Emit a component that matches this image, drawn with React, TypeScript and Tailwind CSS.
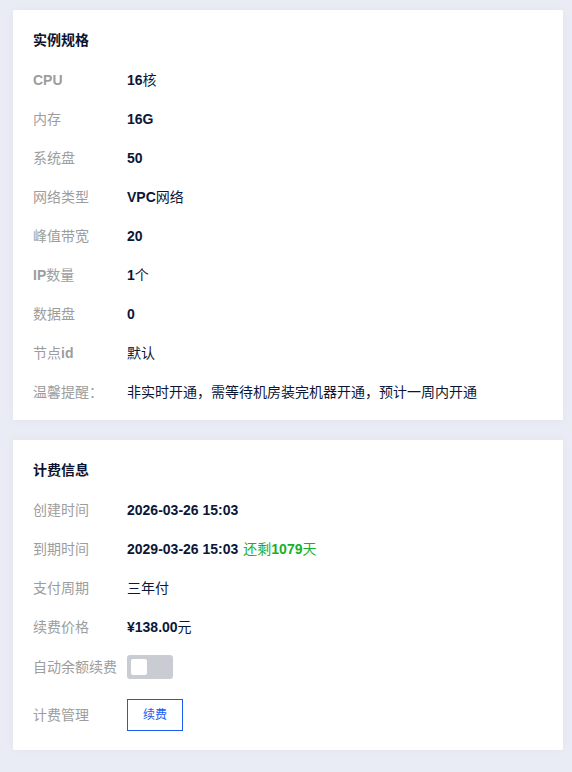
import React from "react";

const font = {
  fontFamily: "'Liberation Sans', 'Noto Sans CJK SC', sans-serif",
};

function Row({
  label,
  children,
  className = "",
}: {
  label: React.ReactNode;
  children: React.ReactNode;
  className?: string;
}) {
  return (
    <div className={`flex items-center ${className}`}>
      <div className="w-[94px] shrink-0 text-[14px] leading-[22px] text-[#9d9d9d]">
        {label}
      </div>
      <div className="flex items-center text-[14px] leading-[22px] text-[#0b1738]">
        {children}
      </div>
    </div>
  );
}

const B = ({ children }: { children: React.ReactNode }) => (
  <span className="font-bold">{children}</span>
);

export default function App() {
  return (
    <div
      className="min-h-[772px] w-[572px] bg-[#e9ecf4] pt-[10px]"
      style={font}
    >
      {/* 实例规格 */}
      <div className="ml-[13px] w-[550px] bg-white px-5 pt-[19px] pb-[17px] shadow-[0_0_10px_rgba(0,20,80,0.04)]">
        <div className="text-[14px] font-bold leading-[22px] text-[#0b1430]">
          实例规格
        </div>
        <div className="mt-[18px] flex flex-col gap-[17px]">
          <Row label={<B>CPU</B>}>
            <B>16</B>核
          </Row>
          <Row label="内存">
            <B>16G</B>
          </Row>
          <Row label="系统盘">
            <B>50</B>
          </Row>
          <Row label="网络类型">
            <B>VPC</B>网络
          </Row>
          <Row label="峰值带宽">
            <B>20</B>
          </Row>
          <Row
            label={
              <>
                <B>IP</B>数量
              </>
            }
          >
            <B>1</B>个
          </Row>
          <Row label="数据盘">
            <B>0</B>
          </Row>
          <Row
            label={
              <>
                节点<B>id</B>
              </>
            }
          >
            默认
          </Row>
          <Row label="温馨提醒：">
            非实时开通，需等待机房装完机器开通，预计一周内开通
          </Row>
        </div>
      </div>

      {/* 计费信息 */}
      <div className="ml-[13px] mt-5 w-[550px] bg-white px-5 pt-[19px] pb-[19px] shadow-[0_0_10px_rgba(0,20,80,0.04)]">
        <div className="text-[14px] font-bold leading-[22px] text-[#0b1430]">
          计费信息
        </div>
        <div className="mt-[18px] flex flex-col gap-[17px]">
          <Row label="创建时间">
            <B>2026-03-26 15:03</B>
          </Row>
          <Row label="到期时间">
            <B>2029-03-26 15:03</B>
            <span className="ml-[5px] text-[#16b02c]">
              还剩<B>1079</B>天
            </span>
          </Row>
          <Row label="支付周期">三年付</Row>
          <Row label="续费价格">
            <B>¥138.00</B>元
          </Row>
          <Row label="自动余额续费">
            <button className="flex h-6 w-[46px] items-center rounded-[3px] bg-[#c9ccd3] pl-1">
              <span className="h-4 w-4 rounded-[2px] bg-white" />
            </button>
          </Row>
        </div>
        <Row label="计费管理" className="mt-5">
          <button className="h-8 w-14 border border-[#1a5cf0] text-[12px] text-[#1a5cf0]">
            续费
          </button>
        </Row>
      </div>
    </div>
  );
}
